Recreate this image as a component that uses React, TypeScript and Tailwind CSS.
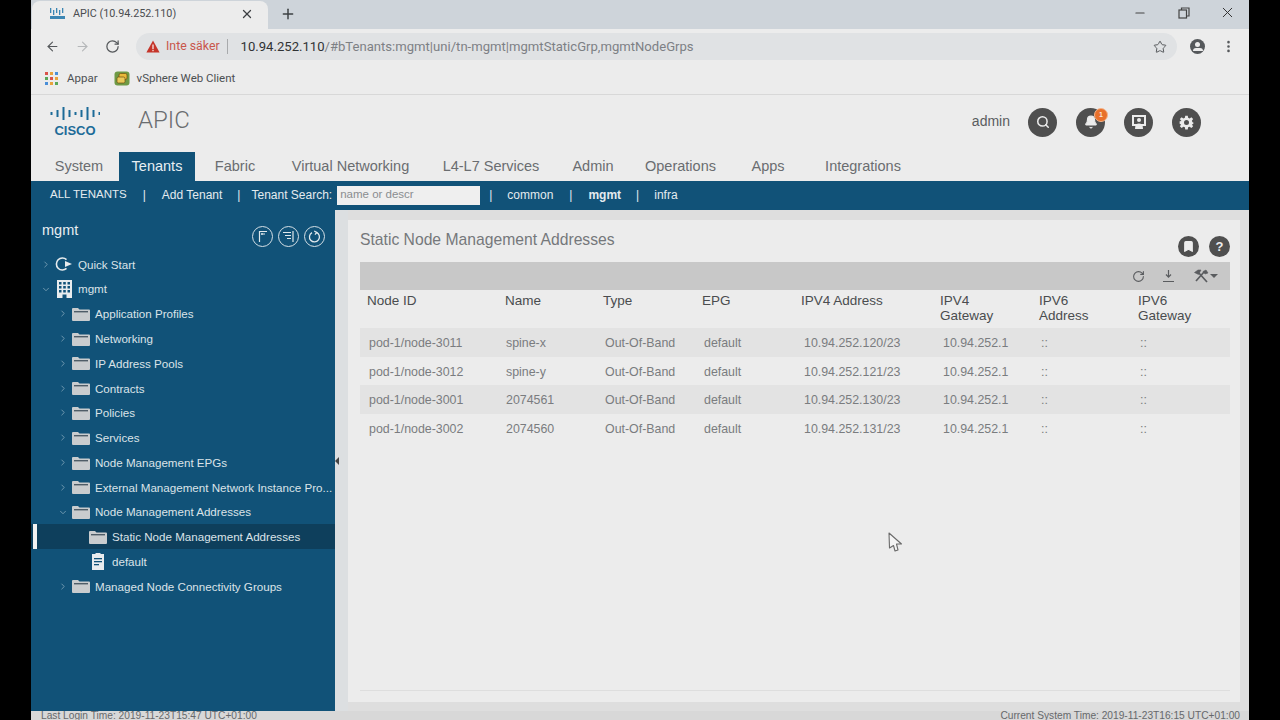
import React from "react";
import { ArrowLeft, ArrowRight, RotateCw, Star, X, Plus, Minus, MoreVertical, ChevronRight, ChevronDown, Search, Bell, Bookmark, RotateCw as Refresh } from "lucide-react";

const navItems = [
  { label: "System", cls: "ml-[24px] w-[48px]" },
  { label: "Tenants", cls: "ml-[16px] w-[76px]", active: true },
  { label: "Fabric", cls: "ml-[20px] w-[40px]" },
  { label: "Virtual Networking", cls: "ml-[36px] w-[119px]" },
  { label: "L4-L7 Services", cls: "ml-[31px] w-[100px]" },
  { label: "Admin", cls: "ml-[31px] w-[42px]" },
  { label: "Operations", cls: "ml-[31px] w-[71px]" },
  { label: "Apps", cls: "ml-[35px] w-[34px]" },
  { label: "Integrations", cls: "ml-[40px] w-[76px]" },
];

const treeItems = [
  { label: "Quick Start", level: 0, open: false, icon: "quick" },
  { label: "mgmt", level: 0, open: true, icon: "tenant" },
  { label: "Application Profiles", level: 1, open: false, icon: "folder" },
  { label: "Networking", level: 1, open: false, icon: "folder" },
  { label: "IP Address Pools", level: 1, open: false, icon: "folder" },
  { label: "Contracts", level: 1, open: false, icon: "folder" },
  { label: "Policies", level: 1, open: false, icon: "folder" },
  { label: "Services", level: 1, open: false, icon: "folder" },
  { label: "Node Management EPGs", level: 1, open: false, icon: "folder" },
  { label: "External Management Network Instance Pro...", level: 1, open: false, icon: "folder" },
  { label: "Node Management Addresses", level: 1, open: true, icon: "folder" },
  { label: "Static Node Management Addresses", level: 2, icon: "folder", selected: true },
  { label: "default", level: 2, icon: "doc" },
  { label: "Managed Node Connectivity Groups", level: 1, open: false, icon: "folder" },
];

const rows = [
  ["pod-1/node-3011", "spine-x"],
  ["pod-1/node-3012", "spine-y"],
  ["pod-1/node-3001", "2074561"],
  ["pod-1/node-3002", "2074560"],
];
const ipv4 = ["10.94.252.120/23", "10.94.252.121/23", "10.94.252.130/23", "10.94.252.131/23"];

const FolderIcon = () => (
  <svg width="18" height="14" viewBox="0 0 18 14">
    <path d="M0 2 a1 1 0 0 1 1-1 h5 l1.5 1.5 H17 a1 1 0 0 1 1 1 V13 a1 1 0 0 1-1 1 H1 a1 1 0 0 1-1-1 Z" fill="#c9ccce" />
    <rect x="2" y="4" width="14" height="1.4" fill="#4f5d68" />
  </svg>
);

const TreeIcon = ({ kind }: { kind?: string }) => {
  if (kind === "quick")
    return (
      <svg width="18" height="14" viewBox="0 0 18 14" fill="none">
        <path d="M11.5 2.6 A6 6 0 1 0 11.5 11.4" stroke="#e8ecee" strokeWidth="1.6" />
        <path d="M10 4 L17 7 L10 10 Z" fill="#e8ecee" />
      </svg>
    );
  if (kind === "tenant")
    return (
      <svg width="15" height="18" viewBox="0 0 15 18">
        <path fillRule="evenodd" d="M0 0 H15 V18 H9.5 V14.5 H5.5 V18 H0 Z M2 2 V4.5 H4.5 V2 Z M6.2 2 V4.5 H8.8 V2 Z M10.5 2 V4.5 H13 V2 Z M2 6 V8.5 H4.5 V6 Z M6.2 6 V8.5 H8.8 V6 Z M10.5 6 V8.5 H13 V6 Z M2 10 V12.5 H4.5 V10 Z M6.2 10 V12.5 H8.8 V10 Z M10.5 10 V12.5 H13 V10 Z" fill="#e8ecee" />
      </svg>
    );
  if (kind === "doc")
    return (
      <svg width="12" height="17" viewBox="0 0 12 17">
        <path d="M0 1 H3.5 V0 H8.5 V1 H12 V17 H0 Z" fill="#e8ecee" />
        <rect x="2" y="5" width="8" height="1.3" fill="#115278" />
        <rect x="2" y="8" width="8" height="1.3" fill="#115278" />
        <rect x="2" y="11" width="5" height="1.3" fill="#115278" />
      </svg>
    );
  return <FolderIcon />;
};

const RoundIcon = ({ children }: { children: React.ReactNode }) => (
  <div className="relative flex h-[29px] w-[29px] items-center justify-center rounded-full bg-[#4f4f4f] text-[#ececec]">{children}</div>
);

const SideAction = ({ children }: { children: React.ReactNode }) => (
  <div className="flex h-[21px] w-[21px] items-center justify-center rounded-full border border-[#d5e0e6]">{children}</div>
);

const ciscoBars = [3, 7, 13, 7, 3, 7, 13, 7, 3];

const CiscoLogo = () => (
  <div className="mb-[1px] flex w-[50px] flex-col items-center">
    <svg width="50" height="13" viewBox="0 0 50 13" fill="#1c6b98">
      {ciscoBars.map((h, i) => (
        <rect key={i} x={i * 6 + 0.5} y={(13 - h) / 2} width="2" height={h} />
      ))}
    </svg>
    <span className="mt-[5px] text-[13px] leading-[11px] font-bold text-[#1c6b98]">CISCO</span>
  </div>
);

const GearIcon = () => (
  <svg width="15" height="15" viewBox="0 0 24 24">
    <path
      fillRule="evenodd"
      fill="#ececec"
      d="M10 1 H14 L14.6 4.4 L17 5.4 L19.8 3.4 L22.6 6.2 L20.6 9 L21.6 11.4 L23 12 V14 L21.6 14.6 L20.6 15 L22.6 17.8 L19.8 20.6 L17 18.6 L14.6 19.6 L14 23 H10 L9.4 19.6 L7 18.6 L4.2 20.6 L1.4 17.8 L3.4 15 L2.4 14.6 L1 14 V10 L4.4 9.4 L3.4 9 L1.4 6.2 L4.2 3.4 L7 5.4 L9.4 4.4 Z M12 8 A4 4 0 1 0 12 16 A4 4 0 1 0 12 8 Z"
    />
  </svg>
);

export default function App() {
  return (
    <div className="relative flex h-[720px] w-[1280px] justify-center overflow-hidden bg-black font-['Liberation_Sans',Arial,sans-serif]">
      <div className="flex w-[1218px] flex-col bg-[#ececec]">
        {/* browser chrome */}
        <div className="flex h-[29px] items-end bg-[#ced4da] pl-[1px]">
          <div className="flex h-[28px] w-[236px] items-center rounded-t-lg bg-[#ececec] pr-[14px] pb-[2px] pl-[18px]">
            <svg width="15" height="12" viewBox="0 0 15 12" fill="#3c86b3">
              {[0, 3, 6, 9, 12].map((x) => (
                <rect key={x} x={x} y={x % 6 === 0 ? 0 : 2} width="1.3" height="5" />
              ))}
              <rect x="0" y="8" width="15" height="3" />
            </svg>
            <span className="ml-[8px] flex-1 text-[10.8px] text-[#4a4d50] font-['Roboto',sans-serif]">APIC (10.94.252.110)</span>
            <X size={14} strokeWidth={2.2} className="text-[#3c3f42]" />
          </div>
          <div className="flex h-[28px] w-[40px] items-center justify-center pb-[2px]">
            <Plus size={16} strokeWidth={2.2} className="text-[#3c4043]" />
          </div>
          <div className="flex-1" />
          <div className="flex h-[29px] items-center pr-[13px] pb-[4px]">
            <Minus size={14} className="text-[#444]" />
            <svg className="ml-[31px]" width="12" height="12" viewBox="0 0 12 12" fill="none" stroke="#444" strokeWidth="1.2">
              <rect x="1" y="3" width="7.5" height="8" />
              <path d="M3.5 3 V1 H11 V9 H8.5" />
            </svg>
            <X size={17} strokeWidth={1.4} className="ml-[29px] text-[#333]" />
          </div>
        </div>
        <div className="flex h-[34px] items-center bg-[#ececec] pt-[1px] pl-[14px]">
          <ArrowLeft size={15} strokeWidth={1.8} className="text-[#55585b]" />
          <ArrowRight size={15} strokeWidth={1.8} className="ml-[15px] text-[#b5b7b9]" />
          <RotateCw size={15} strokeWidth={2} className="ml-[15px] text-[#55585b]" />
          <div className="ml-[16px] flex h-[27px] w-[1041px] items-center rounded-full bg-[#e0e2e4] pl-[10px] text-[12.3px] font-['Roboto',sans-serif]">
            <svg width="14" height="13" viewBox="0 0 14 13">
              <path d="M7 0.5 L13.6 12.5 H0.4 Z" fill="#c5352a" />
              <rect x="6.3" y="4.5" width="1.4" height="4.5" fill="#f3dcd9" />
              <rect x="6.3" y="9.8" width="1.4" height="1.4" fill="#f3dcd9" />
            </svg>
            <span className="ml-[6px] text-[#c9564b]">Inte säker</span>
            <span className="ml-[7px] h-[15px] w-[1px] bg-[#a8aaac]" />
            <span className="ml-[13px] text-[13.1px] text-[#303234]">10.94.252.110</span>
            <span className="text-[13.1px] text-[#7d8084]">/#bTenants:mgmt|uni/tn-mgmt|mgmtStaticGrp,mgmtNodeGrps</span>
            <div className="flex-1" />
            <Star size={14} strokeWidth={1.7} className="mr-[10px] text-[#55585b]" />
          </div>
          <div className="ml-[13px] flex h-[15px] w-[15px] items-center justify-center overflow-hidden rounded-full bg-[#55585b]">
            <div className="h-full w-full">
              <div className="mx-auto mt-[3px] h-[5px] w-[5px] rounded-full bg-[#ececec]" />
              <div className="mx-auto mt-[1px] h-[3px] w-[10px] rounded-t-full bg-[#ececec]" />
            </div>
          </div>
          <MoreVertical size={15} strokeWidth={2.2} className="ml-[16px] text-[#55585b]" />
        </div>
        <div className="flex h-[32px] items-center border-b border-[#d8d8d8] bg-[#ececec] pl-[14px] text-[11.5px] text-[#4d5053] font-['Roboto',sans-serif]">
          <div className="grid h-[13px] w-[13px] grid-cols-3 gap-[2px]">
            {["#d9534a", "#e8a33c", "#4a8fd8", "#5aa85a", "#d9534a", "#e8a33c", "#4a8fd8", "#e8a33c", "#5aa85a"].map((c, i) => (
              <span key={i} className="h-[3px] w-[3px]" style={{ backgroundColor: c }} />
            ))}
          </div>
          <span className="ml-[9px]">Appar</span>
          <svg className="ml-[16px]" width="16" height="15" viewBox="0 0 16 15" fill="none">
            <rect x="0.5" y="0.5" width="15" height="14" rx="3" fill="#6f9a45" />
            <rect x="5" y="2.5" width="8" height="6" rx="1.5" fill="#e9b93a" stroke="#6f4f10" strokeWidth="0.7" />
            <rect x="3" y="6" width="8" height="6" rx="1.5" fill="#e9c95a" stroke="#6f4f10" strokeWidth="0.7" />
          </svg>
          <span className="ml-[7px]">vSphere Web Client</span>
        </div>

        {/* APIC header */}
        <div className="flex h-[57px] items-center bg-[#ececec] pr-[48px] pb-[3px] pl-[19px]">
          <CiscoLogo />
          <span className="mb-[4px] ml-[38px] text-[24px] font-light text-[#6a6d70] font-['Roboto',sans-serif]">APIC</span>
          <div className="flex-1" />
          <span className="mr-[18px] mb-[1px] text-[14px] text-[#5a5c5f]">admin</span>
          <div className="flex items-center gap-[19px]">
            <RoundIcon>
              <Search size={14} strokeWidth={2.6} />
            </RoundIcon>
            <RoundIcon>
              <Bell size={14} fill="#ececec" />
              <span className="absolute top-0 right-[-3px] flex h-[14px] w-[14px] items-center justify-center rounded-full border border-[#f5b48a] bg-[#e8702a] text-[8px] text-white">1</span>
            </RoundIcon>
            <RoundIcon>
              <svg width="16" height="14" viewBox="0 0 16 14">
                <path fillRule="evenodd" d="M1 0 H15 V11 H1 Z M3 2 V9 H13 V2 Z" fill="#ececec" />
                <circle cx="8" cy="5" r="2" fill="#ececec" />
                <path d="M4 14 Q4 8.5 8 8.5 Q12 8.5 12 14 Z" fill="#ececec" />
              </svg>
            </RoundIcon>
            <RoundIcon>
              <GearIcon />
            </RoundIcon>
          </div>
        </div>

        {/* main nav */}
        <div className="flex h-[29px] bg-[#ececec] text-[14.5px] text-[#6a6d70]">
          {navItems.map((n) => (
            <div key={n.label} className={`flex items-center justify-center whitespace-nowrap ${n.cls} ${n.active ? "bg-[#115278] text-[#e8eef2]" : ""}`}>
              {n.label}
            </div>
          ))}
        </div>

        {/* tenant bar */}
        <div className="flex h-[29px] items-center bg-[#115278] pb-[1px] pl-[19px] text-[12px] text-[#e4ebef]">
          <span className="text-[11.5px]">ALL TENANTS</span>
          <span className="ml-[16px]">|</span>
          <span className="ml-[16px]">Add Tenant</span>
          <span className="ml-[15px]">|</span>
          <span className="ml-[11px]">Tenant Search:</span>
          <div className="ml-[5px] flex h-[19px] w-[143px] items-center bg-[#efefef] pl-[3px] text-[11.5px] text-[#8a8d90]">name or descr</div>
          <span className="ml-[9px]">|</span>
          <span className="ml-[15px]">common</span>
          <span className="ml-[16px]">|</span>
          <span className="ml-[16px] font-bold">mgmt</span>
          <span className="ml-[15px]">|</span>
          <span className="ml-[15px]">infra</span>
        </div>

        {/* body */}
        <div className="flex min-h-0 flex-1">
          <aside className="flex w-[304px] flex-col bg-[#115278] text-[#dbe3e8]">
            <div className="flex h-[42px] items-start pt-[10px] pl-[11px]">
              <span className="text-[14.5px] text-[#e8eef2]">mgmt</span>
              <div className="ml-auto flex gap-[5px] pt-[6px] pr-[10px]">
                <SideAction>
                  <svg width="13" height="13" viewBox="0 0 13 13" fill="none" stroke="#e0e8ec" strokeWidth="1.2">
                    <path d="M3.5 12 V1.5 H11" />
                    <path d="M6 5 V3 M5 4 H9" />
                  </svg>
                </SideAction>
                <SideAction>
                  <svg width="13" height="13" viewBox="0 0 13 13" fill="none" stroke="#e0e8ec" strokeWidth="1.2">
                    <path d="M1 2.5 H9 M3 5.5 H9 M5 8.5 H9 M11 1 V12" />
                  </svg>
                </SideAction>
                <SideAction>
                  <svg width="13" height="13" viewBox="0 0 13 13" fill="none" stroke="#e0e8ec" strokeWidth="1.3">
                    <path d="M8.5 2.4 A5 5 0 1 1 4 2.6" />
                    <path d="M6.2 1 L8.8 2.4 L7 4.6" />
                  </svg>
                </SideAction>
              </div>
            </div>
            <div className="flex flex-col">
              {treeItems.map((item) => (
                <div
                  key={item.label}
                  className={`relative flex h-[24.77px] items-center whitespace-nowrap text-[11.6px] ${item.selected ? "bg-[#0e3f5c]" : ""}`}
                >
                  {item.selected && <span className="absolute top-0 left-[2px] h-full w-[4px] bg-[#f2f2f2]" />}
                  <span className={`flex w-[10px] items-center justify-center ${item.level === 0 ? "ml-[10px]" : item.level === 1 ? "ml-[27px]" : "ml-[43px]"}`}>
                    {item.open === true && <ChevronDown size={11} className="text-[#7ea3b8]" />}
                    {item.open === false && <ChevronRight size={11} className="text-[#7ea3b8]" />}
                  </span>
                  <span className={`${item.level === 2 ? "ml-[5px]" : "ml-[4px]"} flex w-[18px] items-center justify-center`}>
                    <TreeIcon kind={item.icon} />
                  </span>
                  <span className="ml-[5px]">{item.label}</span>
                </div>
              ))}
            </div>
          </aside>

          {/* splitter */}
          <div className="flex w-[13px] items-center bg-[#dcdfe1]">
            <span className="h-0 w-0 border-y-[4px] border-r-[4px] border-y-transparent border-r-[#444]" />
          </div>

          {/* content */}
          <main className="flex flex-1 flex-col bg-[#dedede] pt-[10px] pr-[9px] pb-[9px]">
            <div className="flex flex-1 flex-col bg-[#ececec] pt-[8px] pr-[10px] pb-[11px] pl-[12px]">
              <div className="flex h-[34px] items-start">
                <span className="text-[15.7px] text-[#75787b]">Static Node Management Addresses</span>
                <div className="ml-auto flex gap-[10px] pt-[8px]">
                  <div className="flex h-[21px] w-[21px] items-center justify-center rounded-full bg-[#4f4f4f]">
                    <Bookmark size={13} fill="#ececec" className="text-[#ececec]" />
                  </div>
                  <div className="flex h-[21px] w-[21px] items-center justify-center rounded-full bg-[#4f4f4f] text-[13px] font-bold text-[#ececec]">?</div>
                </div>
              </div>
              <div className="flex h-[28px] items-center justify-end bg-[#c8c8c8] pr-[12px] text-[#5a5c5f]">
                <Refresh size={13} className="mr-[17px]" />
                <svg className="mr-[18px]" width="13" height="14" viewBox="0 0 13 14" fill="none" stroke="#5a5c5f" strokeWidth="1.2">
                  <path d="M6.5 1 V8 M4 5.5 L6.5 8.2 L9 5.5 M1 12.5 H12" />
                </svg>
                <svg width="16" height="14" viewBox="0 0 16 14" fill="none" stroke="#5a5c5f" strokeWidth="1.7">
                  <path d="M5 3 L14 13 M11 3 L3 12" />
                  <path d="M1.5 3.5 L5 1 H8 L5.5 5.5 Z" fill="#5a5c5f" strokeWidth="0.6" />
                  <path d="M10 2.5 L13 1 L15 4 L12 5 Z" fill="#5a5c5f" strokeWidth="0.6" />
                </svg>
                <svg className="ml-[1px]" width="8" height="4" viewBox="0 0 8 4">
                  <path d="M0 0 H8 L4 4 Z" fill="#5a5c5f" />
                </svg>
              </div>
              <div className="grid h-[38px] grid-cols-[138px_98px_99px_99px_139px_99px_99px_99px] pt-[3px] text-[13.5px] leading-[15px] text-[#4a4c4f]">
                <div className="pl-[7px]">Node ID</div>
                <div className="pl-[7px]">Name</div>
                <div className="pl-[7px]">Type</div>
                <div className="pl-[7px]">EPG</div>
                <div className="pl-[7px]">IPV4 Address</div>
                <div className="pl-[7px]">IPV4<br />Gateway</div>
                <div className="pl-[7px]">IPV6<br />Address</div>
                <div className="pl-[7px]">IPV6<br />Gateway</div>
              </div>
              {rows.map(([id, name], i) => (
                <div
                  key={id}
                  className={`grid h-[28.7px] grid-cols-[138px_98px_99px_99px_139px_99px_99px_99px] items-center pt-[2px] text-[12.4px] text-[#7a7c7f] ${i % 2 === 0 ? "bg-[#e3e3e3]" : ""}`}
                >
                  <div className="pl-[9px]">{id}</div>
                  <div className="pl-[8px]">{name}</div>
                  <div className="pl-[9px]">Out-Of-Band</div>
                  <div className="pl-[9px]">default</div>
                  <div className="pl-[10px]">{ipv4[i]}</div>
                  <div className="pl-[10px]">10.94.252.1</div>
                  <div className="pl-[9px]">::</div>
                  <div className="pl-[9px]">::</div>
                </div>
              ))}
              <div className="flex-1" />
              <div className="h-[1px] bg-[#dedede]" />
            </div>
          </main>
        </div>

        {/* footer */}
        <div className="flex h-[9px] items-start justify-between overflow-hidden bg-[#d8d8d8] px-[10px] text-[10.2px] leading-[10px] text-[#66686b]">
          <span>Last Login Time: 2019-11-23T15:47 UTC+01:00</span>
          <span className="-mr-[1px]">Current System Time: 2019-11-23T16:15 UTC+01:00</span>
        </div>
      </div>

      {/* mouse pointer */}
      <svg className="absolute top-[532px] left-[888px]" width="15" height="20" viewBox="0 0 15 20">
        <path d="M1 1 L13.5 12 L8.5 12 L10 18 L7 19 L5.5 13.5 L1.5 16 Z" fill="#f4f4f4" stroke="#6a6a6a" strokeWidth="1.1" strokeLinejoin="round" />
      </svg>
    </div>
  );
}
